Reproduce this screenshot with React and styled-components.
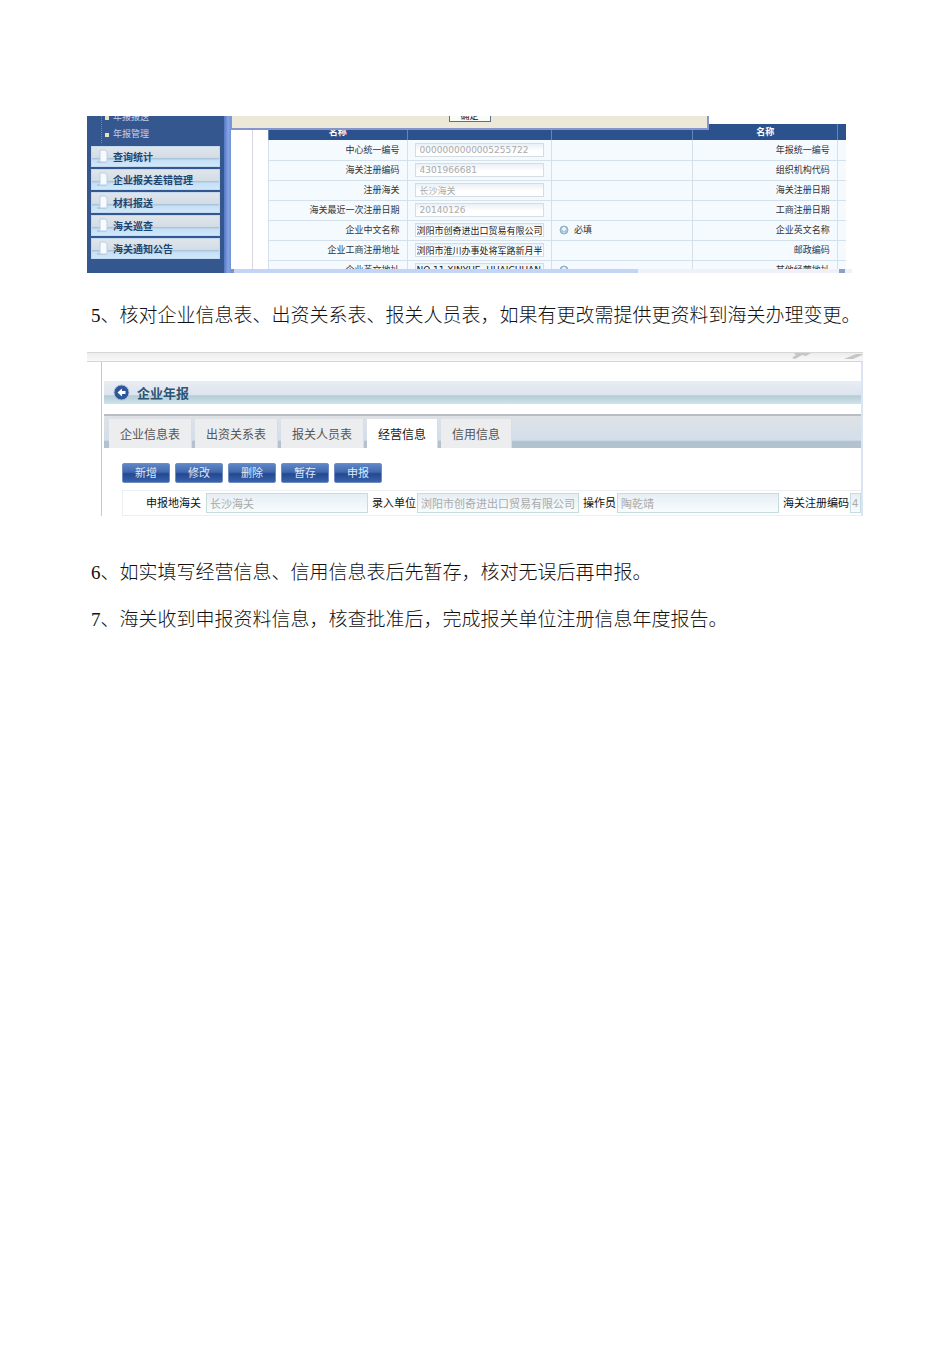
import React from 'react'
import styled, { createGlobalStyle } from 'styled-components'

const GlobalStyle = createGlobalStyle`
    * {
        box-sizing: border-box;
    }

    body {
        margin: 0;
        background: #fff;
        font-family: "Liberation Sans", "Noto Sans CJK SC", sans-serif;
    }

    button, input {
        font-family: inherit;
    }
`

const Page = styled.main`
    padding: 116px 87px 48px;
`

const Step = styled.p`
    margin: ${({ margin }) => margin || '0'};
    padding-left: 4px;
    font-family: "Liberation Serif", "Noto Sans CJK SC", serif;
    font-size: 19px;
    font-weight: 300;
    line-height: 47px;
    color: #111;
    white-space: nowrap;
`

/* Customs system window */

const SystemWindow = styled.section`
    display: flex;
    height: 157px;
    margin-right: 11px;
    overflow: hidden;
`

const Sidebar = styled.nav`
    display: flex;
    flex: 0 0 137px;
    flex-direction: column;
    justify-content: flex-end;
    gap: 3px;
    padding: 0 4px 14px;
    background: #35578f;
`

const SubMenu = styled.ul`
    margin: 0 0 0 10px;
    padding: 0 0 0 3px;
    border-left: 1px dotted #6c88b8;
    list-style: none;
`

const SubMenuItem = styled.li`
    display: flex;
    align-items: center;
    gap: 4px;
    height: 17px;

    &::before {
        width: 4px;
        height: 4px;
        background: #e6e3c4;
        content: '';
    }
`

const SubMenuLink = styled.a`
    font-size: 9px;
    line-height: 17px;
    color: #c3d0e8;
    text-decoration: none;
`

const Menu = styled.div`
    display: flex;
    flex-direction: column;
    gap: 2px;
`

const MenuLink = styled.a`
    display: flex;
    align-items: center;
    gap: 5px;
    height: 21px;
    padding-left: 5px;
    border: 1px solid #c2d9f0;
    background: linear-gradient(#dfe5ea 0%, #d3dde6 55%, #a9c3d8 60%, #c5e0f5 70%, #cfe7fb 100%);
    font-size: 10px;
    font-weight: 700;
    color: #1f456f;
    text-decoration: none;
`

const Splitter = styled.div`
    flex: 0 0 7px;
    background: linear-gradient(90deg, #5577c0, #86a5e4 60%, #7191d6);
`

const Workspace = styled.div`
    position: relative;
    display: flex;
    flex: 1;
    flex-direction: column;
    min-width: 0;
`

const TableArea = styled.div`
    flex: 1;
    min-height: 0;
    margin-left: 21px;
    padding: 8px 6px 0 15px;
    border-left: 1px solid #d5d8de;
    overflow: hidden;
`

const Table = styled.table`
    width: 100%;
    table-layout: fixed;
    border-collapse: collapse;
`

const HeadCell = styled.th`
    height: 16px;
    padding: 0;
    border-left: 1px solid #6485b5;
    background: #2c528e;
    font-size: 9px;
    line-height: 15px;
    color: #fff;
`

const Cell = styled.td`
    height: 20px;
    padding: 0 7px;
    border: solid #d4e0ea;
    border-width: 0 0 1px 1px;
    background: #f5faff;
    font-size: 9px;
    line-height: 14px;
    text-align: ${({ align }) => align || 'left'};
    color: #333;
    white-space: nowrap;
    overflow: hidden;
`

const CellInput = styled.input`
    display: block;
    width: 100%;
    height: 14px;
    padding: 0 1px;
    border: 1px solid #d3dde3;
    background: linear-gradient(#eaf1f7, #fff 60%);
    font-family: "DejaVu Sans", "Noto Sans CJK SC", sans-serif;
    font-size: 9px;
    color: #222;

    &:disabled {
        padding: 0 4px;
        color: #aaa;
    }
`

const Required = styled.span`
    display: flex;
    align-items: center;
    gap: 5px;
`

const ScrollTrack = styled.div`
    display: flex;
    justify-content: space-between;
    height: 4px;
    background: #eef1f8;

    &::before {
        width: 65%;
        border-left: 3px solid #8593b5;
        background: #c3d4f7;
        content: '';
    }

    &::after {
        width: 6px;
        margin-right: 7px;
        background: #8aa0c8;
        content: '';
    }
`

const Dialog = styled.div`
    position: absolute;
    top: 0;
    left: 0;
    display: flex;
    align-items: flex-end;
    justify-content: center;
    width: 77%;
    height: 14px;
    padding-bottom: 6px;
    border: solid #8795cc;
    border-width: 0 2px 2px 1px;
    background: #ece9d8;
`

const DialogButton = styled.button`
    width: 42px;
    height: 12px;
    padding: 0;
    border: 1px solid #5a6f92;
    background: #fbfbf8;
    font-size: 9px;
    line-height: 10px;
    color: #111;
`

/* Annual report window */

const ReportWindow = styled.section`
    height: 164px;
    overflow: hidden;
`

const TopStrip = styled.div`
    display: flex;
    justify-content: flex-end;
    height: 10px;
    border: solid #d6d6d6;
    border-width: 1px 0;
    background: linear-gradient(#ececec, #f8f8f8);
`

const ReportBody = styled.div`
    margin-left: 14px;
    padding: 19px 0 0 2px;
    border: solid #c9c9c9;
    border-width: 0 2px 0 1px;
    border-right-color: #dbe4f3;
`

const TitleBar = styled.h2`
    display: flex;
    align-items: center;
    gap: 7px;
    height: 23px;
    margin: 0 0 10px;
    padding-left: 9px;
    background: linear-gradient(#e9edf3 0%, #dde4ee 60%, #b3ccd5 64%, #cfe3ea 100%);
    font-size: 13px;
    font-weight: 700;
    color: #2c5674;
`

const Tabs = styled.div`
    display: flex;
    align-items: flex-end;
    gap: 3px;
    height: 34px;
    padding-left: 5px;
    border-top: 2px solid #b9bcc0;
    background: linear-gradient(#dfe2e6 0%, #d2deea 75%, #b1c1cf 80%, #b4c2cf 100%);
`

const Tab = styled.button`
    height: 29px;
    padding: 0 11px;
    border: 0;
    border-right: 1px solid #d9dee2;
    background: ${({ $active }) => ($active ? '#fff' : '#ebedef')};
    font-size: 12px;
    color: ${({ $active }) => ($active ? '#222' : '#555')};
`

const Toolbar = styled.div`
    display: flex;
    gap: 5px;
    padding: 15px 0 7px 18px;
`

const ToolButton = styled.button`
    width: 48px;
    height: 20px;
    padding: 0;
    border: 1px solid #6f8dc0;
    border-radius: 2px;
    background: linear-gradient(#5f86c6 0%, #4068ae 45%, #24488f 55%, #3963ae 100%);
    font-size: 11px;
    line-height: 18px;
    color: #dfe8f8;
`

const Fields = styled.form`
    display: flex;
    align-items: center;
    height: 26px;
    margin-left: 18px;
    border: 1px solid #eceff1;
    border-right: 0;
    overflow: hidden;
`

const FieldLabel = styled.label`
    flex: none;
    padding: ${({ $first }) => ($first ? '0 5px 0 23px' : '0 1px 0 4px')};
    font-size: 11px;
    line-height: 24px;
    color: #111;
`

const FieldInput = styled.input`
    flex: ${({ $short }) => ($short ? '0 0 11px' : '1 0 160px')};
    width: 0;
    height: 20px;
    padding: 0 ${({ $short }) => ($short ? '1px' : '3px')};
    border: 1px solid #c6dcdf;
    background: linear-gradient(#e6eff4, #f8fcfd);
    font-size: 11px;
    color: #aaa;
`

const subMenu = ['年报报送', '年报管理']
const menu = ['查询统计', '企业报关差错管理', '材料报送', '海关巡查', '海关通知公告']

const rows = [
    { id: 'center', label: '中心统一编号', value: '0000000000005255722', disabled: true, right: '年报统一编号' },
    { id: 'customs', label: '海关注册编码', value: '4301966681', disabled: true, right: '组织机构代码' },
    { id: 'place', label: '注册海关', value: '长沙海关', disabled: true, right: '海关注册日期' },
    { id: 'date', label: '海关最近一次注册日期', value: '20140126', disabled: true, right: '工商注册日期' },
    { id: 'nameCn', label: '企业中文名称', value: '浏阳市创奇进出口贸易有限公司', required: '必填', right: '企业英文名称' },
    { id: 'address', label: '企业工商注册地址', value: '浏阳市淮川办事处将军路新月半', right: '邮政编码' },
    { id: 'addressEn', label: '企业英文地址', value: 'NO.11 XINYUE, HUAICHUAN', required: ' ', right: '其他经营地址' }
]

const tabs = ['企业信息表', '出资关系表', '报关人员表', '经营信息', '信用信息']
const actions = ['新增', '修改', '删除', '暂存', '申报']

function PageIcon() {
    return (
        <svg width="11" height="15" viewBox="0 0 11 15" aria-hidden="true">
            <path d="M0 12h9v2H0z" fill="#b4cbdd" />
            <path d="M3 1h5l2 2v10H3z" fill="#f7fbff" stroke="#b9cfe2" />
        </svg>
    )
}

function HintIcon() {
    return (
        <svg width="10" height="10" viewBox="0 0 10 10" aria-hidden="true">
            <circle cx="5" cy="5" r="4" fill="#a9c6da" stroke="#8fb0c8" />
            <path d="M3 4l2-2 2 2-2 2zM5 7v1" fill="#e8f2f8" stroke="#e8f2f8" />
        </svg>
    )
}

function BackIcon() {
    return (
        <svg width="17" height="17" viewBox="0 0 17 17" aria-hidden="true">
            <circle cx="8.5" cy="8.5" r="7.5" fill="#2d5799" stroke="#a9bedb" />
            <path d="M4.5 8.5l4.5-4v2.5h3.500v3H9v2.500z" fill="#fff" />
        </svg>
    )
}

function CornerMarks() {
    return (
        <svg width="74" height="8" viewBox="0 0 74 8" aria-hidden="true">
            <path d="M5 0h17l-5 3-4-1-7 4-3-1 4-3zM55 6l12-5h6v1l-9 4z" fill="#c6c6c6" />
        </svg>
    )
}

function CustomsSystem() {
    return (
        <SystemWindow>
            <Sidebar>
                <SubMenu>
                    {subMenu.map((item) => (
                        <SubMenuItem key={item}><SubMenuLink href="#">{item}</SubMenuLink></SubMenuItem>
                    ))}
                </SubMenu>
                <Menu>
                    {menu.map((item) => (
                        <MenuLink key={item} href="#"><PageIcon />{item}</MenuLink>
                    ))}
                </Menu>
            </Sidebar>
            <Splitter />
            <Workspace>
                <TableArea>
                    <Table>
                        <colgroup>
                            <col width="24%" />
                            <col width="25%" />
                            <col width="24.5%" />
                            <col width="25%" />
                            <col width="1.5%" />
                        </colgroup>
                        <thead>
                            <tr>
                                <HeadCell>名称</HeadCell>
                                <HeadCell />
                                <HeadCell />
                                <HeadCell>名称</HeadCell>
                                <HeadCell />
                            </tr>
                        </thead>
                        <tbody>
                            {rows.map((row) => (
                                <tr key={row.id}>
                                    <Cell align="right"><label htmlFor={row.id}>{row.label}</label></Cell>
                                    <Cell>
                                        <CellInput id={row.id} defaultValue={row.value} disabled={row.disabled} />
                                    </Cell>
                                    <Cell>
                                        {row.required && <Required><HintIcon />{row.required}</Required>}
                                    </Cell>
                                    <Cell align="right">{row.right}</Cell>
                                    <Cell />
                                </tr>
                            ))}
                        </tbody>
                    </Table>
                </TableArea>
                <ScrollTrack />
                <Dialog>
                    <DialogButton type="button">确定</DialogButton>
                </Dialog>
            </Workspace>
        </SystemWindow>
    )
}

function AnnualReport() {
    return (
        <ReportWindow>
            <TopStrip><CornerMarks /></TopStrip>
            <ReportBody>
                <TitleBar><BackIcon />企业年报</TitleBar>
                <Tabs role="tablist">
                    {tabs.map((tab) => (
                        <Tab
                        key={tab}
                        type="button"
                        role="tab"
                        aria-selected={tab === '经营信息'}
                        $active={tab === '经营信息'}
                        >
                            {tab}
                        </Tab>
                    ))}
                </Tabs>
                <Toolbar>
                    {actions.map((action) => (
                        <ToolButton key={action} type="button">{action}</ToolButton>
                    ))}
                </Toolbar>
                <Fields>
                    <FieldLabel htmlFor="declare" $first>申报地海关</FieldLabel>
                    <FieldInput id="declare" defaultValue="长沙海关" disabled />
                    <FieldLabel htmlFor="unit">录入单位</FieldLabel>
                    <FieldInput id="unit" defaultValue="浏阳市创奇进出口贸易有限公司" disabled />
                    <FieldLabel htmlFor="operator">操作员</FieldLabel>
                    <FieldInput id="operator" defaultValue="陶乾靖" disabled />
                    <FieldLabel htmlFor="code">海关注册编码</FieldLabel>
                    <FieldInput id="code" defaultValue="4" disabled $short />
                </Fields>
            </ReportBody>
        </ReportWindow>
    )
}

function App() {
    return (
        <Page>
            <GlobalStyle />
            <CustomsSystem />
            <Step margin="19px 0 13px">5、核对企业信息表、出资关系表、报关人员表，如果有更改需提供更资料到海关办理变更。</Step>
            <AnnualReport />
            <Step margin="33px 0 0">6、如实填写经营信息、信用信息表后先暂存，核对无误后再申报。</Step>
            <Step>7、海关收到申报资料信息，核查批准后，完成报关单位注册信息年度报告。</Step>
        </Page>
    )
}

export default App
